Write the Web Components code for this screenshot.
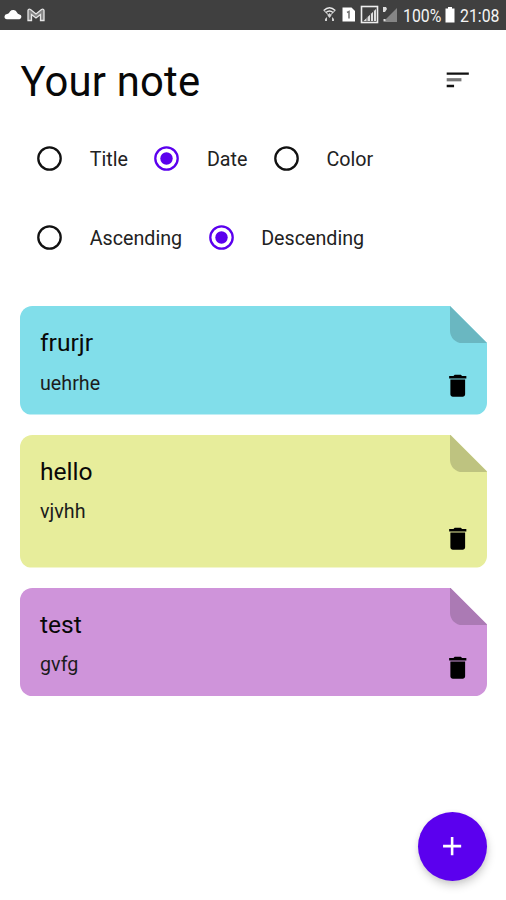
<!DOCTYPE html>
<html lang="en">
<head>
<meta charset="utf-8">
<title>Your note</title>
<style>
  html, body {
    margin: 0;
    height: 100%;
    background: #fff;
  }
</style>
</head>
<body>
<notes-app></notes-app>

<script>
"use strict";

function attach(element, html) {
  const template = document.createElement("template");
  template.innerHTML = html;
  element.attachShadow({ mode: "open" }).appendChild(template.content.cloneNode(true));
}

customElements.define(
  "status-bar",
  class StatusBar extends HTMLElement {
    constructor() {
      super();
      attach(this, `
      <style>
      :host {
        display: flex;
        justify-content: space-between;
        height: 29.5px;
        background: #404040;
        color: #f4f4f4;
      }
      svg { display: block; }
      .right { display: flex; }
      .text {
        font-size: 18px;
        line-height: 31px;
        white-space: nowrap;
        transform-origin: left;
        transform: scaleX(0.88);
      }
      .battery { width: 36px; margin-right: 6px; }
      .time { width: 40px; margin: 0 6.5px 0 4.5px; }
      .cell { margin-top: 7px; }
      </style>
      <svg width="50" height="29" viewBox="0 0 50 29">
        <path fill="#fff" d="M7 19.200a2.600 2.600 0 0 1 .2-5.200Q9 13.500 10 11.500A4.200 4.200 0 0 1 17 12.500Q17.500 14.200 19.500 14.500A2.400 2.400 0 0 1 19.500 19.200Z"/>
        <path fill="#858585" stroke="#e6e6e6" stroke-width="1.300" d="M28 20.500V10.500Q28.500 8.500 30.500 9.500L36 14L41.500 9.500Q43.500 8.500 44 10.500V20.500H40.500V14.500L36 18L31.500 14.500V20.500Z"/>
      </svg>
      <div class="right">
        <svg width="80" height="29" viewBox="0 0 80 29">
          <g fill="none" stroke="#e8e8e8" stroke-width="1.500">
            <path d="M0.800 10.500Q6.500 4.800 12.200 10.500M3 12.500Q6.500 9.500 10 12.500"/>
            <path d="M1 10.500L6.500 16L12 10.500" stroke-width="1"/>
          </g>
          <path fill="#d0d0d0" d="M6.500 13l2 2.500-2 2.500-2-2.500zM4 17v4H2v-2zM9 17v4h2v-2z"/>
          <path fill="#fff" d="M19.500 7.500h9l3.500 3.500v10.500H19.500z"/>
          <path fill="none" stroke="#777" stroke-width="1.600" d="M24 12.500l2-1v7"/>
          <rect x="38.500" y="6.500" width="16" height="16" fill="none" stroke="#eee" stroke-width="1.600"/>
          <path fill="#ddd" d="M40.500 21L53 9v12z"/>
          <path stroke="#505050" stroke-width="1" d="M44 16v5M47.500 13v8M50.500 10v11"/>
          <path fill="#858585" d="M60 22L74 8v14z"/>
          <path fill="#ddd" d="M60 7h3l1 2-2 3h-2zM60.500 19h2v2h-2z"/>
        </svg>
        <span class="text battery">100%</span>
        <svg class="cell" width="10" height="16"><path fill="#fff" d="M3 0h4v1.500h2.500V15.500H.5V1.500H3z"/></svg>
        <span class="text time">21:08</span>
      </div>`);
    }
  }
);

customElements.define(
  "order-option",
  class OrderOption extends HTMLElement {
    constructor() {
      super();
      attach(this, `
      <style>
      :host {
        display: flex;
        align-items: center;
        height: 25px;
        color: #222;
      }
      svg { display: block; flex: none; color: #111; }
      :host([checked]) svg { color: #5b00ee; }
      .dot { display: none; }
      :host([checked]) .dot { display: inline; }
      .label {
        margin-left: 27.5px;
        padding-top: 3px;
        font-size: 19.7px;
        line-height: 26px;
        white-space: nowrap;
      }
      </style>
      <svg width="25" height="25" viewBox="0 0 25 25">
        <circle cx="12.500" cy="12.500" r="11.200" fill="none" stroke="currentColor" stroke-width="2.300"/>
        <circle class="dot" cx="12.500" cy="12.500" r="6.200" fill="currentColor"/>
      </svg>
      <span class="label"><slot></slot></span>`);
    }
  }
);

customElements.define(
  "order-section",
  class OrderSection extends HTMLElement {
    constructor() {
      super();
      attach(this, `
      <style>
      :host {
        display: grid;
        row-gap: 54px;
        padding: 0 0 0 37.2px;
      }
      .row { display: flex; gap: 26.5px; }
      </style>
      <div class="row"><slot name="field"></slot></div>
      <div class="row"><slot name="direction"></slot></div>`);
    }
  }
);

customElements.define(
  "note-card",
  class NoteCard extends HTMLElement {
    constructor() {
      super();
      attach(this, `
      <style>
      :host {
        display: flex;
        flex-direction: column;
        position: relative;
        box-sizing: border-box;
        min-height: 108.500px;
        padding: 18px 20px 0;
        border-radius: 12.300px;
        background: var(--note-color);
        clip-path: polygon(0 0, calc(100% - 37px) 0, 100% 37px, 100% 100%, 0 100%);
      }
      .fold {
        position: absolute;
        top: 0;
        right: 0;
        width: 37px;
        height: 37px;
        border-bottom-left-radius: 12.300px;
        background: var(--fold-color);
      }
      .title {
        font-size: 24.600px;
        line-height: 37px;
      }
      .content {
        margin-top: 8.500px;
        font-size: 19.700px;
        line-height: 28px;
        color: #1c1c1c;
      }
      .delete {
        position: absolute;
        right: 15px;
        bottom: 14px;
      }
      </style>
      <div class="fold"></div>
      <div class="title"><slot name="title"></slot></div>
      <div class="content"><slot></slot></div>
      <svg class="delete" width="29.500" height="29.500" viewBox="0 0 24 24">
        <path d="M6 19c0 1.100.9 2 2 2h8c1.100 0 2-.9 2-2V7H6v12zM19 4h-3.500l-1-1h-5l-1 1H5v2h14V4z"/>
      </svg>`);
    }
  }
);

customElements.define(
  "add-button",
  class AddButton extends HTMLElement {
    constructor() {
      super();
      attach(this, `
      <style>
      :host {
        display: grid;
        place-items: center;
        width: 69px;
        height: 69px;
        border-radius: 50%;
        background: #5b00ee;
        box-shadow: 1px 5px 9px rgba(0, 0, 0, 0.17), 0 1px 5px rgba(0, 0, 0, 0.07);
      }
      </style>
      <svg width="31" height="31" viewBox="0 0 24 24">
        <path fill="#fff" d="M18.700 12.700h-6v6h-2v-6h-6v-2h6v-6h2v6h6z"/>
      </svg>`);
    }
  }
);

customElements.define(
  "notes-app",
  class NotesApp extends HTMLElement {
    constructor() {
      super();
      attach(this, `
      <style>
      :host {
        display: flex;
        flex-direction: column;
        position: relative;
        height: 900px;
        overflow: hidden;
        font-family: Roboto, sans-serif;
        color: #080808;
      }
      header {
        display: flex;
        justify-content: space-between;
        align-items: center;
        height: 60px;
        padding: 20.500px 34px 0 20.500px;
      }
      h1 {
        margin: 0;
        padding-top: 3px;
        font-size: 41.800px;
        font-weight: 400;
        line-height: 60px;
        letter-spacing: 0.200px;
      }
      order-section { margin-top: 35.500px; }
      .notes {
        display: grid;
        gap: 20px;
        padding: 56.500px 19px 0 20px;
      }
      .tall { min-height: 133px; }
      add-button {
        position: absolute;
        right: 19px;
        bottom: 19px;
      }
      </style>
      <status-bar></status-bar>
      <header>
        <h1>Your note</h1>
        <svg width="29.500" height="29.500" viewBox="0 0 24 24">
          <path fill="#111" d="M3 18h6v-2H3v2zM3 6v2h18V6H3z"/>
          <path fill="#777" d="M3 13.300h12v-2.600H3v2.600z"/>
        </svg>
      </header>
      <order-section>
        <order-option slot="field">Title</order-option>
        <order-option slot="field" checked>Date</order-option>
        <order-option slot="field">Color</order-option>
        <order-option slot="direction">Ascending</order-option>
        <order-option slot="direction" checked>Descending</order-option>
      </order-section>
      <div class="notes">
        <note-card style="--note-color: #81deea; --fold-color: #6ab7c1"><span slot="title">frurjr</span>uehrhe</note-card>
        <note-card class="tall" style="--note-color: #e7ed9b; --fold-color: #bec380"><span slot="title">hello</span>vjvhh</note-card>
        <note-card style="--note-color: #cf94da; --fold-color: #ab7ab4"><span slot="title">test</span>gvfg</note-card>
      </div>
      <add-button></add-button>`);
    }
  }
);
</script>
</body>
</html>
